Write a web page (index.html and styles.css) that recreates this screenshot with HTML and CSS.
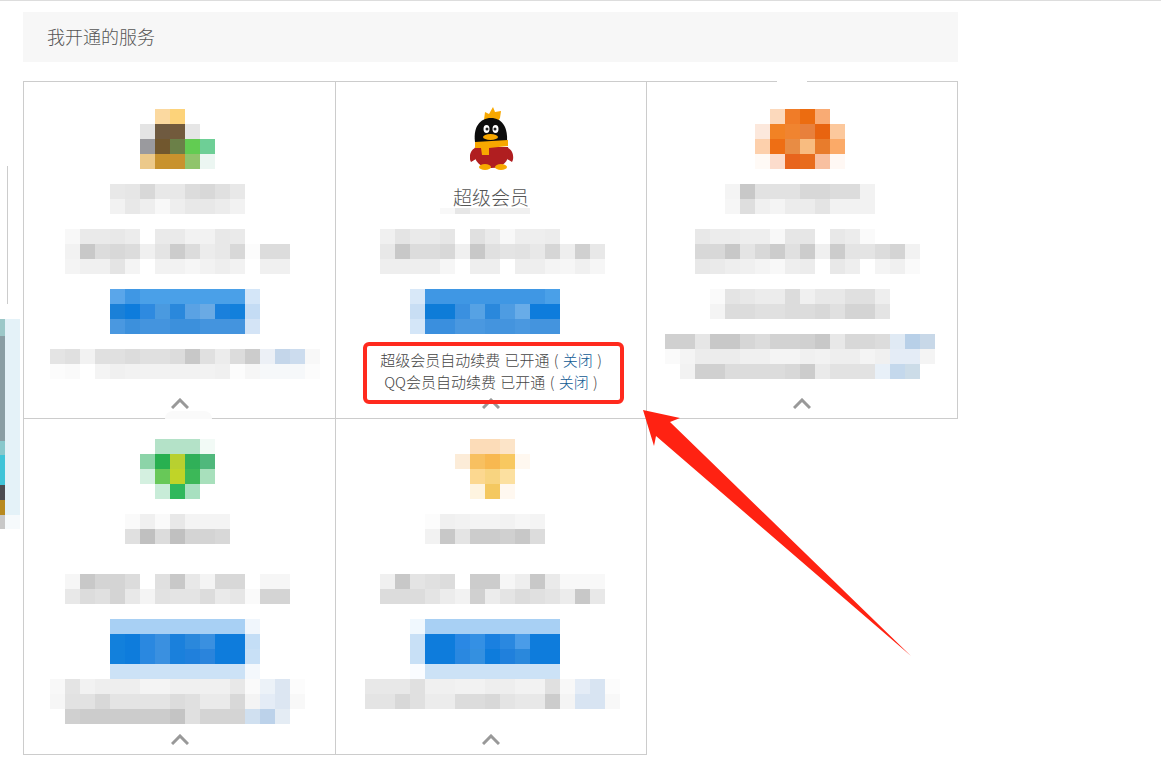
FILE: index.html
```html
<!DOCTYPE html>
<html lang="zh-CN">
<head>
    <meta charset="UTF-8">
    <meta name="viewport" content="width=device-width, initial-scale=1.0">
    <title>我开通的服务</title>
    <link rel="stylesheet" href="styles.css">
</head>
<body>
    <div class="page">
        <aside class="side">
            <div class="side-line"></div>
            <div class="side-strip"></div>
        </aside>

        <main class="main">
            <div class="title-bar">我开通的服务</div>

            <div class="service-grid">
                <!-- 第一行 -->
                <section class="card">
                    <div class="mosaic" data-x="116" data-rows="- fbd9a0 fdd37a|e4 6f5a40 725a3c e6|9a9a9e 71572e 6b8048 62cc52 6ecf96|ecc98a c8922e c8922e 90c46c ecf6f2"></div>
                    <div class="mosaic" data-x="86" data-rows="e8 e6 d8 e8 e8 dc d8 e0 e8|f2 e8 ee f8 ee e8 e8 ec f2"></div>
                    <div class="mosaic" data-x="41" data-rows="f8 ea ea e8 ec ff ea ea f2 f2 e8 ea ff ff ff|f2 c8 dc d8 dc f0 e4 cc dc ec e8 d8 fc dc dc|f4 f0 f0 e4 f4 ff f2 f2 f6 f2 ee f2 ff f0 f0"></div>
                    <div class="mosaic" data-x="86" data-rows="5aa6ea 3f97e4 4aa0e8 4aa0e8 4aa0e8 4aa0e8 4aa0e8 4aa0e8 4aa0e8 d4e6f8|1a80d8 0e7cdc 2e8ae0 4a9ae0 2a88dc 5aa2e4 6aaae4 1a80dc 1280dc c4dcf4|4a98e0 3c90dc 4494de 4494de 3c90dc 3c90dc 4494de 4494de 4494de d4e4f6"></div>
                    <div class="mosaic" data-x="26" data-rows="e4 e0 f2 e0 e0 dc e0 e0 dc c8 e0 ec dc cc ecf0f6 c4d6ea ccdcee f8|fc fa ff f4 f0 f2 f2 f2 f2 f2 f2 f0 fc f6 f6f8fa f6f8fa f6f8fa fc"></div>
                    <svg class="chevron" width="18" height="11" viewBox="0 0 18 11"><path d="M1 10 L9 2 L17 10" fill="none" stroke="#999" stroke-width="3"/></svg>
                    <div class="tear tear-bottom"></div>
                </section>

                <section class="card">
                    <svg class="qq-logo" width="44" height="63" viewBox="0 0 44 63">
                        <path d="M14 13 L15 5 L19 7 L23 0 L25 5 L31 4 L30 11 L27 16 L17 16 Z" fill="#f8a800"/>
                        <path d="M5 35 C3 20 10 11 21 11 C32 11 38 20 37 35 Z" fill="#0c0c0c"/>
                        <path d="M5 41 C-1 44 -1 52 1 55 L6 52 Z M38 41 C44 44 44 52 42 55 L37 52 Z" fill="#b01e20"/>
                        <path d="M5 40 L38 40 C41 50 36 61 21 61 C7 61 2 50 5 40 Z" fill="#b01e20"/>
                        <ellipse cx="15" cy="60" rx="6" ry="3" fill="#f8a800"/>
                        <ellipse cx="31" cy="60" rx="6" ry="3" fill="#f8a800"/>
                        <path d="M5 35 L38 33 L38 39 L19 41 L19 48 L12 48 L11 41 L5 41 Z" fill="#f8a800"/>
                        <ellipse cx="16.5" cy="22" rx="3" ry="4" fill="#fff"/>
                        <ellipse cx="25.5" cy="22" rx="3" ry="4" fill="#fff"/>
                        <circle cx="17" cy="22" r="1.5" fill="#222"/>
                        <circle cx="25" cy="22" r="1.5" fill="#222"/>
                        <ellipse cx="20.5" cy="30" rx="7.5" ry="3" fill="#f8a800"/>
                    </svg>
                    <div class="service-name">超级会员</div>
                    <div class="name-smudge"></div>
                    <div class="mosaic" data-x="44" data-rows="f0 e4 ea ea e6 ff e0 ea f8 ee ee ec ff ff ff|e8 c8 dc dc d8 f0 c8 e0 e4 e2 e8 d6 ee d0 e8|ee ee ee ee f6 ff ee ee ff ee ee f4 f6 f0 f6"></div>
                    <div class="mosaic" data-x="74" data-rows="d8e8f8 3f97e4 3f97e4 3f97e4 3f97e4 3f97e4 3f97e4 3f97e4 3f97e4 4aa0e8|c8def4 0e7cd8 0e7cd8 3a90e0 56a2e4 2a88dc 4e9ce2 68ace8 0e7cdc 0e7cdc|d4e6f8 3a8fde 3a8fde 4a98e0 4a98e0 4494de 4494de 4a98e0 4494de 4494de"></div>
                    <div class="renew-info">
                        <p>超级会员自动续费 已开通 ( <a href="#">关闭</a> )</p>
                        <p>QQ会员自动续费 已开通 ( <a href="#">关闭</a> )</p>
                    </div>
                    <svg class="chevron" width="18" height="11" viewBox="0 0 18 11"><path d="M1 10 L9 2 L17 10" fill="none" stroke="#999" stroke-width="3"/></svg>
                </section>

                <section class="card">
                    <div class="mosaic" data-x="108" data-rows="- fcd9bc f07c28 ec6c10 f9ab74 -|fce8dc f28224 f08430 e8803c e86410 fcc89c|fdd0ac ee6e14 e88c44 f8bc80 e87c2c fbaa68|fffaf6 fcdccc e8641c e86c1c f8c0a0 fff8f4"></div>
                    <div class="mosaic" data-x="78" data-rows="f4 c8 e2 e2 e2 d8 d8 dc dc f2|f6 de f0 f4 ec ec e4 f2 f2 f2"></div>
                    <div class="mosaic" data-x="48" data-rows="e8 ec ec ee ee f8 e6 e6 ff e8 ec fa ff ff ff|d8 d8 c8 e4 d8 cc e0 cc f0 cc e4 e4 dc d4 f2|e8 ea ee f0 f4 f8 ee ec ff e8 ee ff f4 f0 fa"></div>
                    <div class="mosaic" data-x="63" data-rows="fa e4 e8 ec ec dc f0 e8 e8 e0 e0 ee|f4 dc dc e0 e0 dc dc d8 e0 d4 d4 e4"></div>
                    <div class="mosaic" data-x="18" data-rows="d0 d0 e6 c8 c8 d6 dc d2 d2 d0 c8 e8 d8 d8 dc e0eaf4 b8d0e8 c8d8e8|fa f4 ec ec ec f0 f0 f4 f4 f0 f2 ee ee f4 f0 e4ecf6 e4ecf6 f4|- f2 d0 d0 dc dc dc dc d8 cc ea e2 e2 e2 e8f0f8 c4d8ec ccdce8 -"></div>
                    <svg class="chevron" width="18" height="11" viewBox="0 0 18 11"><path d="M1 10 L9 2 L17 10" fill="none" stroke="#999" stroke-width="3"/></svg>
                    <div class="tear tear-top"></div>
                </section>

                <!-- 第二行 -->
                <section class="card card-low">
                    <div class="mosaic" data-x="116" data-rows="- b4e2c8 b4e2c8 b4e2c8 f2faf6|8cd4a8 28b050 b8d030 30b058 50b87c|d4f0e0 68c858 c0d428 3cb858 a8e0bc|- c8ecd8 30b85c a8e0c0 -"></div>
                    <div class="mosaic" data-x="101" data-rows="fa f0 fa e8 f4 f4 f4|e0 c0 dc c0 d4 d4 d8"></div>
                    <div class="mosaic m-desc" data-x="41" data-rows="f6 c8 d4 d4 dc ff e0 c8 e8 f4 d8 d8 ff f6 f6|e8 dc e0 d4 e8 f4 e2 e4 e4 dc ea e6 fa d4 d4"></div>
                    <div class="mosaic" data-x="86" data-rows="a8d0f4 a8d0f4 a8d0f4 a8d0f4 a8d0f4 a8d0f4 a8d0f4 a8d0f4 a8d0f4 f0f6fc|1280dc 0e7cdc 2a88e0 3a90e0 1a80dc 2a88dc 3a90e0 0e7cdc 0e7cdc c4def6|1280dc 0e7cdc 2a88e0 3a90e0 1a80dc 2080dc 2a84dc 0e7cdc 0e7cdc c8e0f6|cce2f6 cce2f6 cce2f6 cce2f6 cce2f6 cce2f6 cce2f6 cce2f6 cce2f6 f4f8fc"></div>
                    <div class="mosaic m-foot" data-x="26" data-rows="f8 e4 f2 ee ee ee f4 f4 f0 f0 f0 f0 e8 fa ecf2f8 dce6f2 fc|f6 e2 e2 d8 e4 e4 e4 e4 dc e0 ea ea d8 f4 e4ecf6 dce6f2 f8|- d0 cc cc cc cc cc cc c4 e0 d4 d4 d4 d0e0f0 bcd2ea e4ecf4 -"></div>
                    <svg class="chevron" width="18" height="11" viewBox="0 0 18 11"><path d="M1 10 L9 2 L17 10" fill="none" stroke="#999" stroke-width="3"/></svg>
                </section>

                <section class="card card-low">
                    <div class="mosaic" data-x="119" data-rows="- fcdcb8 fcdcb8 fce4c8 -|fcecd8 f8c060 f8b850 f8c860 fff8f0|- fcd890 f8d480 fce0a0 -|- fef4e0 f4c860 fff8f0 -"></div>
                    <div class="mosaic" data-x="89" data-rows="fc f0 f2 f4 f4 f2 f6 f4|f2 c8 e4 cc cc d0 c8 dc"></div>
                    <div class="mosaic m-desc" data-x="44" data-rows="f0 c8 e4 e0 dc ff cc cc f6 ee c8 ea f8 f8 f8|dc dc dc e4 ec f2 d0 ec e4 dc e0 e4 ec c8 e8"></div>
                    <div class="mosaic" data-x="74" data-rows="f0f8fe a8d0f4 a8d0f4 a8d0f4 a8d0f4 a8d0f4 a8d0f4 a8d0f4 a8d0f4 a8d0f4|c8e0f6 0e7cdc 0e7cdc 2a88e4 3490e4 1a80e0 2a88e0 4a9ce8 0e7cdc 0e7cdc|c8e0f6 0e7cdc 0e7cdc 2a88e0 3490e0 0e7cdc 2080dc 2a88dc 0e7cdc 0e7cdc|fafcff cce2f6 cce2f6 cce2f6 cce2f6 cce2f6 cce2f6 cce2f6 cce2f6 cce2f6"></div>
                    <div class="mosaic m-foot" data-x="29" data-rows="e8 e8 e8 e0 f0 f0 f2 f2 ee ee f2 f2 e0 f8 e4ecf6 d8e4f2 fc|e4 e4 d8 e0 ec ec dc dc d8 e4 e8 e8 cc f4 d8e4f2 d8e4f2 f8"></div>
                    <svg class="chevron" width="18" height="11" viewBox="0 0 18 11"><path d="M1 10 L9 2 L17 10" fill="none" stroke="#999" stroke-width="3"/></svg>
                </section>
            </div>
        </main>
    </div>

    <!-- 红框和箭头标注 -->
    <svg class="annotations" width="1161" height="774" viewBox="0 0 1161 774">
        <rect x="365" y="344" width="257" height="58" rx="4" fill="none" stroke="#ff2a1e" stroke-width="4"/>
        <polygon points="643,410 680,418 670,422 911,656 656,436 654,446" fill="#ff2212"/>
    </svg>

    <script src="mosaic.js"></script>
</body>
</html>
```

FILE: styles.css
```css
* {
    margin: 0;
    padding: 0;
    box-sizing: border-box;
}

body {
    font-family: "Noto Sans CJK SC", "Liberation Sans", sans-serif;
    background: #fff;
    color: #555;
    height: 774px;
    overflow: hidden;
}

.page {
    display: flex;
    border-top: 1px solid #ddd;
}

.side {
    width: 23px;
    flex-shrink: 0;
}

.side-line {
    width: 1px;
    height: 138px;
    margin: 165px 0 0 7px;
    background: #ccc;
}

.side-strip {
    width: 20px;
    height: 210px;
    margin-top: 15px;
    background:
        linear-gradient(#9cc8c8 0, #9cc8c8 17px, #8a9ea4 17px, #8a9ea4 122px, #88c8cc 122px, #88c8cc 136px,
            #40c4d8 136px, #40c4d8 166px, #4c4c50 166px, #4c4c50 181px, #b88a20 181px, #b88a20 196px,
            #c8c8c8 196px) left top / 5px 100% no-repeat,
        linear-gradient(#e4f2f8 0, #e4f2f8 196px, #f6fafc 196px);
}

.main {
    width: 935px;
    padding-top: 11px;
}

.title-bar {
    height: 50px;
    line-height: 48px;
    padding-left: 24px;
    margin-bottom: 19px;
    background: #f7f7f7;
    font-size: 18px;
    font-weight: 300;
    color: #555;
}

.service-grid {
    display: grid;
    grid-template-columns: 312px 311px 311px;
    grid-template-rows: 337px 336px;
    border-top: 1px solid #ccc;
    border-left: 1px solid #ccc;
}

.card {
    position: relative;
    display: flex;
    flex-direction: column;
    align-items: flex-start;
    padding: 27px 0 9px;
    border-right: 1px solid #ccc;
    border-bottom: 1px solid #ccc;
}

.card > * {
    flex-shrink: 0;
}

.card-low {
    padding-top: 20px;
}

.mosaic {
    display: grid;
    grid-auto-rows: 15px;
    margin-top: 15px;
}

.mosaic:first-child {
    margin-top: 0;
}

.mosaic.m-desc {
    margin-top: 30px;
}

.mosaic.m-foot {
    margin-top: 0;
}

.chevron {
    align-self: center;
    margin-top: auto;
}

.tear {
    position: absolute;
    height: 8px;
    background: #fafafa;
}

.tear-bottom {
    left: 141px;
    bottom: -1px;
    width: 47px;
    border-radius: 16px 16px 0 0;
}

.tear-top {
    left: 130px;
    top: -1px;
    width: 30px;
    height: 3px;
    background: #fff;
}

.qq-logo {
    margin: -2px 0 0 134px;
}

.service-name {
    width: 100%;
    height: 24px;
    margin-top: 14px;
    line-height: 26px;
    text-align: center;
    font-size: 19px;
    font-weight: 300;
    color: #555;
}

.name-smudge {
    width: 90px;
    height: 6px;
    margin-left: 104px;
    background: linear-gradient(90deg, #f8f8f8 0, #f8f8f8 15px, #e6e6e6 15px, #e6e6e6 30px, #f0f0f0 30px);
}

.renew-info {
    width: 100%;
    margin-top: 15px;
    text-align: center;
    font-size: 15px;
    font-weight: 300;
    line-height: 22px;
    word-spacing: 1px;
    color: #444;
}

.renew-info a {
    color: #0f5a94;
    text-decoration: none;
}

.annotations {
    position: absolute;
    top: 0;
    left: 0;
}
```

FILE: mosaic.js
```js
// 打码区域: 每个 token 是一个 15px 的格子, 两位是灰度, 六位是颜色, - 是空白
document.querySelectorAll('.mosaic').forEach(function(block) {
    var rows = block.dataset.rows.split('|').map(function(row) {
        return row.split(' ');
    });
    var cols = Math.max.apply(null, rows.map(function(row) {
        return row.length;
    }));

    block.style.marginLeft = block.dataset.x + 'px';
    block.style.gridTemplateColumns = 'repeat(' + cols + ', 15px)';

    rows.forEach(function(row) {
        for (var i = 0; i < cols; i++) {
            var token = row[i] || '-';
            var cell = document.createElement('span');
            if (token.length == 2) {
                cell.style.background = '#' + token + token + token;
            } else if (token.length == 6) {
                cell.style.background = '#' + token;
            }
            block.appendChild(cell);
        }
    });
});
```
